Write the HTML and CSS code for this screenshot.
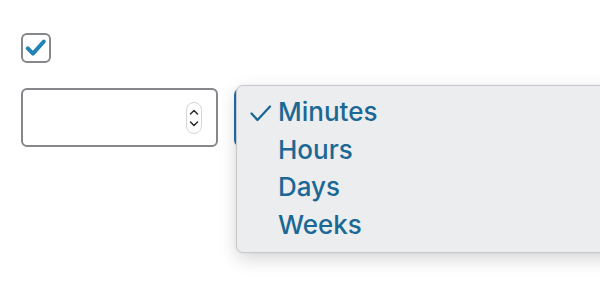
FILE: index.html
```html
<!DOCTYPE html>
<html lang="en">
<head>
<meta charset="utf-8">
<title>Interval settings</title>
<link rel="stylesheet" href="styles.css">
</head>
<body>
  <div class="page">
    <div class="checkbox">
      <svg class="checkbox-mark" viewBox="0 0 30 30" width="26" height="26" aria-hidden="true">
        <polyline points="5.5,15.5 11.5,21.5 24,7.5" fill="none" stroke="#2382b6" stroke-width="4.6" stroke-linecap="round" stroke-linejoin="round"/>
      </svg>
    </div>
    <div class="row">
      <div class="number-input">
        <div class="spinner">
          <svg viewBox="0 0 16 32" width="16" height="32" aria-hidden="true">
            <polyline points="4.5,12 8,8.5 11.5,12" fill="none" stroke="#2c2c2e" stroke-width="1.5" stroke-linecap="round" stroke-linejoin="round"/>
            <polyline points="4.5,20 8,23.5 11.5,20" fill="none" stroke="#2c2c2e" stroke-width="1.5" stroke-linecap="round" stroke-linejoin="round"/>
          </svg>
        </div>
      </div>
      <div class="select">
        <div class="menu">
          <div class="item selected">
            <svg class="tick" viewBox="0 0 24 18" width="24" height="18" aria-hidden="true">
              <polyline points="2.5,8.5 8.5,15 21,1.5" fill="none" stroke="#1b6894" stroke-width="2.3" stroke-linecap="round" stroke-linejoin="round"/>
            </svg>
            Minutes
          </div>
          <div class="item">Hours</div>
          <div class="item">Days</div>
          <div class="item">Weeks</div>
        </div>
      </div>
    </div>
  </div>
</body>
</html>
```

FILE: styles.css
```css
html, body {
  margin: 0;
  padding: 0;
  background: #ffffff;
}

.page {
  width: 600px;
  height: 282px;
  box-sizing: border-box;
  overflow: hidden;
  padding: 33px 0 0 21px;
  font-family: Inter, "Noto Sans", sans-serif;
}

.checkbox {
  width: 26px;
  height: 26px;
  border: 2px solid #85878b;
  border-radius: 6px;
  background: #ffffff;
  display: flex;
  align-items: center;
  justify-content: center;
}

.checkbox-mark {
  display: block;
}

.row {
  display: flex;
  gap: 16px;
  margin-top: 25px;
  margin-right: -20px;
}

.number-input {
  width: 179px;
  height: 55px;
  flex: none;
  border: 2px solid #85878b;
  border-radius: 6px;
  background: #ffffff;
  display: flex;
  align-items: center;
  justify-content: flex-end;
  padding-right: 14px;
}

.spinner {
  width: 14px;
  height: 30px;
  border: 1px solid #d4d5d8;
  border-radius: 8px;
  background: #ffffff;
  display: flex;
  align-items: center;
  justify-content: center;
}

.spinner svg {
  display: block;
  flex: none;
}

.select {
  position: relative;
  flex: 1;
  height: 55px;
  border: 2px solid #2271b1;
  border-radius: 7px;
  background: #ffffff;
}

.menu {
  position: absolute;
  left: 0;
  right: -2px;
  top: -5px;
  height: 168px;
  box-sizing: border-box;
  padding: 7px 0 0 0;
  background: #ebedef;
  border: 1px solid #c6c8cb;
  border-radius: 7px;
  box-shadow: 0 6px 18px rgba(0, 0, 0, 0.16), 0 0 3px rgba(0, 0, 0, 0.06);
}

.item {
  position: relative;
  padding-left: 41px;
  font-size: 26px;
  line-height: 37.5px;
  font-weight: 500;
  color: #1b6894;
  white-space: nowrap;
}

.tick {
  position: absolute;
  left: 12px;
  top: 12px;
  display: block;
}
```
